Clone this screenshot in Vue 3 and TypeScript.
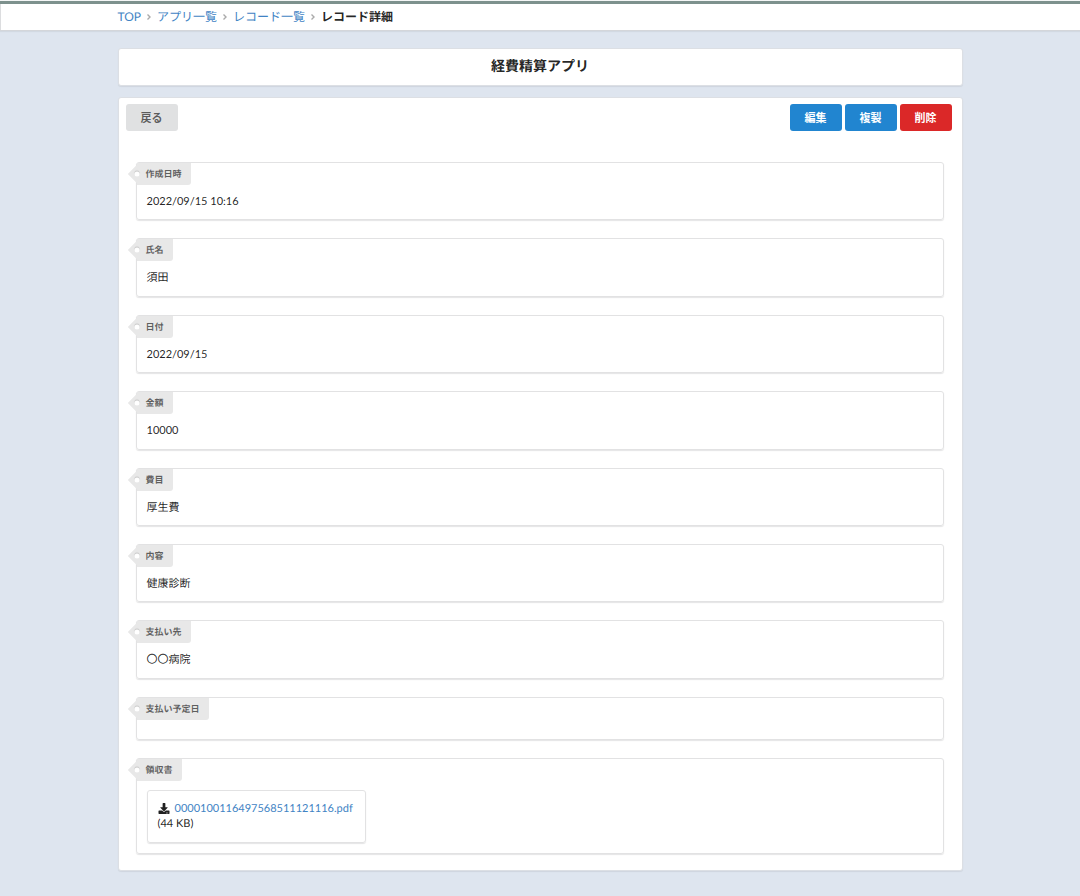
<script setup lang="ts">
interface Crumb {
  label: string
  href: string
}

interface Attachment {
  name: string
  size: string
}

interface Field {
  label: string
  value?: string
  file?: Attachment
}

const crumbs: Crumb[] = [
  { label: 'TOP', href: '#top' },
  { label: 'アプリ一覧', href: '#apps' },
  { label: 'レコード一覧', href: '#records' },
]

const fields: Field[] = [
  { label: '作成日時', value: '2022/09/15 10:16' },
  { label: '氏名', value: '須田' },
  { label: '日付', value: '2022/09/15' },
  { label: '金額', value: '10000' },
  { label: '費目', value: '厚生費' },
  { label: '内容', value: '健康診断' },
  { label: '支払い先', value: '〇〇病院' },
  { label: '支払い予定日' },
  { label: '領収書', file: { name: '0000100116497568511121116.pdf', size: '(44 KB)' } },
]
</script>

<template>
  <div class="page">
    <header class="topbar">
      <nav class="container breadcrumb" aria-label="breadcrumb">
        <template v-for="crumb in crumbs" :key="crumb.label">
          <a :href="crumb.href">{{ crumb.label }}</a>
          <svg class="chevron" viewBox="0 0 6 8" aria-hidden="true">
            <path d="M1.500 1.500 L4 4 L1.500 6.500" />
          </svg>
        </template>
        <span class="current" aria-current="page">レコード詳細</span>
      </nav>
    </header>

    <main class="container content">
      <h1 class="segment title">経費精算アプリ</h1>

      <section class="segment record">
        <div class="toolbar">
          <button type="button" class="button">戻る</button>
          <div class="actions">
            <button type="button" class="button primary">編集</button>
            <button type="button" class="button primary">複製</button>
            <button type="button" class="button danger">削除</button>
          </div>
        </div>

        <dl class="fields">
          <div v-for="field in fields" :key="field.label" class="field">
            <dt class="tag"><span class="tag-text">{{ field.label }}</span></dt>
            <dd class="value">
              <div v-if="field.file" class="attachment">
                <div class="file">
                  <svg class="download" viewBox="0 0 512 512" aria-hidden="true">
                    <path
                      d="M216 0h80c13.300 0 24 10.700 24 24v168h87.700c17.800 0 26.700 21.500 14.100 34.100L269.700 378.300c-7.500 7.500-19.800 7.500-27.300 0L90.100 226.100c-12.600-12.600-3.700-34.100 14.100-34.100H192V24c0-13.300 10.700-24 24-24zm296 376v112c0 13.300-10.700 24-24 24H24c-13.300 0-24-10.700-24-24V376c0-13.300 10.700-24 24-24h146.700l49 49c20.100 20.100 52.500 20.100 72.600 0l49-49H488c13.300 0 24 10.700 24 24zm-124 88c0-11-9-20-20-20s-20 9-20 20 9 20 20 20 20-9 20-20zm64 0c0-11-9-20-20-20s-20 9-20 20 9 20 20 20 20-9 20-20z"
                    />
                  </svg>
                  <a href="#file">{{ field.file.name }}</a>
                </div>
                <div>{{ field.file.size }}</div>
              </div>
              <template v-else>{{ field.value }}</template>
            </dd>
          </div>
        </dl>
      </section>
    </main>
  </div>
</template>

<style>
body {
  margin: 0;
  background: #dee5ef;
}
</style>

<style scoped>
.page {
  min-height: 100vh;
  box-sizing: border-box;
  padding: 1px 0 24px;
  font-family: Lato, 'Noto Sans CJK JP', sans-serif;
  font-size: 11px;
  line-height: 1.4;
  text-rendering: geometricPrecision;
  color: rgba(0, 0, 0, 0.87);
  background: #dee5ef;
}

a {
  color: #4183c4;
  text-decoration: none;
}

.container {
  width: 100%;
  max-width: 845px;
  margin: 0 auto;
}

.topbar {
  border-top: 3px solid #7d918d;
  border-bottom: 1px solid #d4d6da;
  background: #fff;
  box-shadow: 0 -1px 0 #f4f6f6, inset 1px 0 0 #dcdddf, 0 1px 1px rgba(34, 36, 38, 0.06);
}

.breadcrumb {
  display: flex;
  align-items: center;
  gap: 5px;
  height: 26px;
  font-size: 12px;
  line-height: 26px;
}

.chevron {
  width: 6px;
  height: 8px;
  fill: none;
  stroke: #aaa;
  stroke-width: 1.4;
}

.current {
  font-weight: 700;
}

.content {
  display: flex;
  flex-direction: column;
  gap: 11px;
  margin-top: 17px;
}

.segment {
  box-sizing: border-box;
  border: 1px solid #dcdfe4;
  border-radius: 3px;
  background: #fff;
  box-shadow: 0 1px 1px rgba(34, 36, 38, 0.08);
}

.title {
  margin: 0;
  padding: 7px 8px 9px;
  font-size: 14px;
  line-height: 20px;
  font-weight: 700;
  text-align: center;
}

.record {
  padding: 6px 18px 16px 17px;
}

.toolbar {
  display: flex;
  justify-content: space-between;
  margin: 0 -8px 0 -10px;
}

.actions {
  display: flex;
  gap: 3px;
}

.button {
  padding: 0 15px;
  border: 0;
  border-radius: 3px;
  background: #e0e1e2;
  color: rgba(0, 0, 0, 0.6);
  font-family: inherit;
  font-size: 11px;
  font-weight: 700;
  line-height: 27px;
  cursor: pointer;
}

.primary {
  background: #2185d0;
  color: #fff;
}

.danger {
  background: #db2828;
  color: #fff;
}

.fields {
  display: flex;
  flex-direction: column;
  gap: 18px;
  margin: 31px 0 0;
}

.field {
  position: relative;
  padding: 31px 10px 10px;
  border: 1px solid #e2e2e3;
  border-radius: 3px;
  box-shadow: 0 1px 1px rgba(34, 36, 38, 0.12);
}

.tag {
  position: absolute;
  top: 0;
  left: 0;
  padding: 0 9px;
  border-radius: 0 0 3px 0;
  background: #e8e8e8;
  color: rgba(0, 0, 0, 0.6);
  font-size: 9px;
  font-weight: 700;
  line-height: 22px;
}

.tag::before {
  content: '';
  position: absolute;
  top: 50%;
  left: 0;
  width: 13px;
  height: 13px;
  background: #e8e8e8;
  transform: translate(-50%, -50%) rotate(45deg);
}

.tag::after {
  content: '';
  position: absolute;
  top: 50%;
  left: 0;
  width: 5px;
  height: 5px;
  border-radius: 50%;
  background: #fff;
  box-shadow: 0 -1px 1px rgba(0, 0, 0, 0.15);
  transform: translate(-50%, -50%);
}

.tag-text {
  position: relative;
}

.value {
  margin: 0;
}

.attachment {
  box-sizing: border-box;
  width: 219px;
  max-width: 100%;
  padding: 10px;
  border: 1px solid #e2e2e3;
  border-radius: 3px;
  box-shadow: 0 1px 1px rgba(34, 36, 38, 0.12);
}

.file {
  display: flex;
  align-items: center;
  gap: 5px;
}

.download {
  width: 12px;
  height: 11px;
  fill: currentColor;
}
</style>
